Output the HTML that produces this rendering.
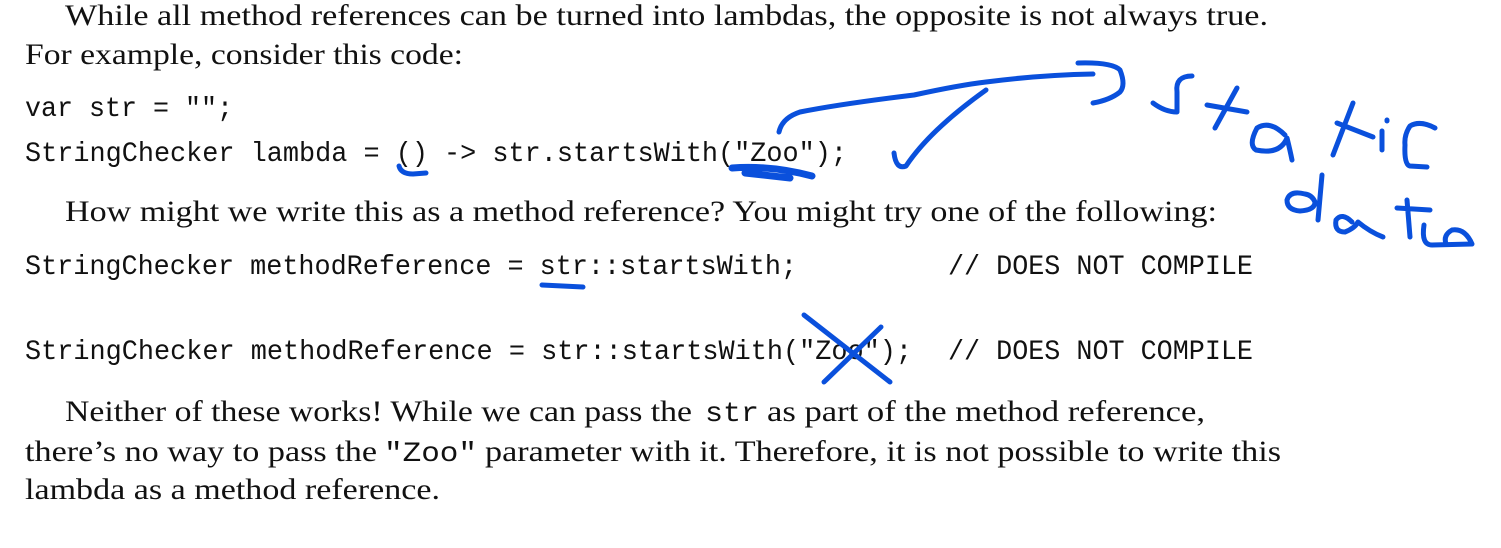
<!DOCTYPE html>
<html><head><meta charset="utf-8"><style>
html,body{margin:0;padding:0;background:#fff;}
svg{display:block;}
.s{font-family:"Liberation Serif",serif;font-size:30px;fill:#111;}
.m{font-family:"Liberation Mono",monospace;font-size:28px;fill:#111;}
.p{fill:none;stroke:#0a50dc;stroke-width:5;stroke-linecap:round;stroke-linejoin:round;}
</style></head><body>
<svg width="1501" height="548" viewBox="0 0 1501 548" xmlns="http://www.w3.org/2000/svg">
<text class="s" x="65" y="25" textLength="1203" lengthAdjust="spacingAndGlyphs">While all method references can be turned into lambdas, the opposite is not always true.</text>
<text class="s" x="25" y="64" textLength="438" lengthAdjust="spacingAndGlyphs">For example, consider this code:</text>
<text class="m" x="25" y="116" textLength="208" lengthAdjust="spacingAndGlyphs">var str = "";</text>
<text class="m" x="25" y="161" textLength="822" lengthAdjust="spacingAndGlyphs">StringChecker lambda = () -&gt; str.startsWith("Zoo");</text>
<text class="s" x="65" y="221" textLength="1152" lengthAdjust="spacingAndGlyphs">How might we write this as a method reference? You might try one of the following:</text>
<text class="m" x="25" y="274" textLength="772" lengthAdjust="spacingAndGlyphs">StringChecker methodReference = str::startsWith;</text>
<text class="m" x="948" y="274" textLength="305" lengthAdjust="spacingAndGlyphs">// DOES NOT COMPILE</text>
<text class="m" x="25" y="359" textLength="887" lengthAdjust="spacingAndGlyphs">StringChecker methodReference = str::startsWith("Zoo");</text>
<text class="m" x="948" y="359" textLength="305" lengthAdjust="spacingAndGlyphs">// DOES NOT COMPILE</text>
<text class="s" x="65" y="421" textLength="627" lengthAdjust="spacingAndGlyphs">Neither of these works! While we can pass the</text>
<text class="m" x="705" y="421" textLength="54" lengthAdjust="spacingAndGlyphs">str</text>
<text class="s" x="767" y="421" textLength="438" lengthAdjust="spacingAndGlyphs">as part of the method reference,</text>
<text class="s" x="25" y="461" textLength="352" lengthAdjust="spacingAndGlyphs">there’s no way to pass the</text>
<text class="m" x="384" y="461" textLength="93" lengthAdjust="spacingAndGlyphs">"Zoo"</text>
<text class="s" x="485" y="461" textLength="796" lengthAdjust="spacingAndGlyphs">parameter with it. Therefore, it is not possible to write this</text>
<text class="s" x="25" y="499" textLength="415" lengthAdjust="spacingAndGlyphs">lambda as a method reference.</text>

<path class="p" d="M399,166 Q401,174 413,174 L426,173"/>
<path class="p" style="stroke-width:7" d="M732,168 Q770,165 812,176 M745,173 L790,178"/>
<path class="p" d="M542,285 L583,287"/>
<path class="p" d="M804,315 L890,382 M881,327 L824,382"/>
<path class="p" d="M779,132 Q782,118 800,112 Q840,104 914,95 Q960,85 986,82 Q1040,75 1093,74"/>
<path class="p" d="M1078,63 Q1112,62 1120,70 Q1126,85 1120,92 Q1110,100 1093,103"/>
<path class="p" d="M894,153 Q896,170 906,166 Q930,130 986,90"/>
<path class="p" d="M1192,76 Q1175,76 1177,92 L1177,112 Q1165,112 1153,103"/>
<path class="p" d="M1237,88 L1215,128 M1207,105 L1247,112"/>
<path class="p" d="M1285,135 Q1270,120 1257,128 Q1248,145 1256,150 Q1280,155 1287,138 Q1290,150 1292,160"/>
<path class="p" d="M1353,103 L1333,155 M1337,123 L1373,137"/>
<path class="p" d="M1387,120 L1387,121 M1382,131 L1382,150"/>
<path class="p" d="M1435,128 Q1420,120 1410,126 Q1404,135 1405,145 Q1404,165 1410,166 L1427,167"/>
<path class="p" d="M1305,194 Q1290,190 1287,200 Q1287,210 1300,211 Q1315,210 1315,202 Q1312,195 1305,194 M1322,175 L1318,220"/>
<path class="p" d="M1352,222 Q1342,212 1336,220 Q1334,232 1345,232 Q1355,228 1358,222 Q1370,232 1383,237"/>
<path class="p" d="M1407,200 L1410,237 M1397,208 L1430,210"/>
<path class="p" d="M1424,225 Q1421,245 1432,245 L1472,244 Q1465,228 1452,230 Q1443,235 1446,244"/>
</svg>
</body></html>
